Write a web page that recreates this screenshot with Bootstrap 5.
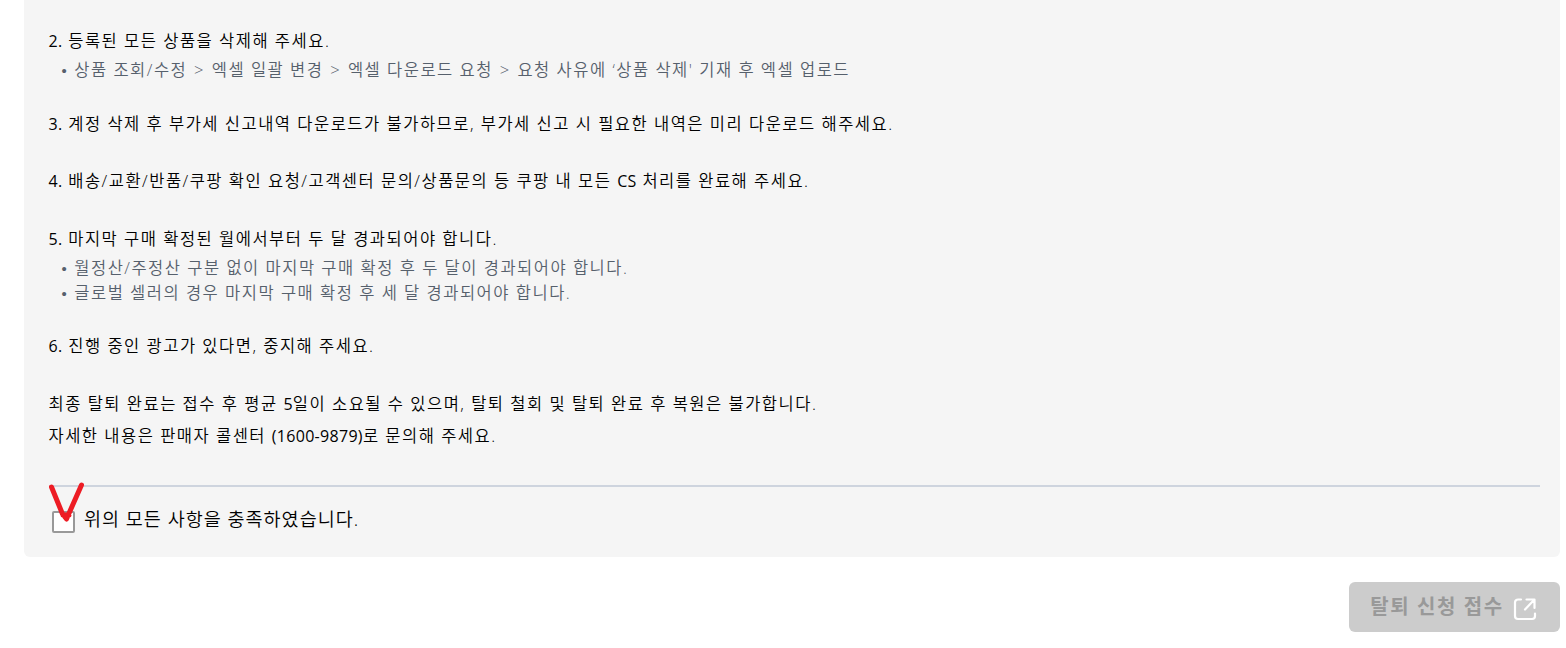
<!DOCTYPE html>
<html lang="ko">
<head>
  <meta charset="UTF-8" />
  <meta name="viewport" content="width=device-width, initial-scale=1.0" />
  <title>탈퇴 신청</title>
  <link
    href="https://cdn.jsdelivr.net/npm/bootstrap@5.3.2/dist/css/bootstrap.min.css"
    rel="stylesheet"
  />
  <style>
    body {
      font-family: "Open Sans", "Noto Sans CJK KR", sans-serif;
      font-size: 16.5px;
      font-weight: 350;
      color: #000;
      overflow: hidden;
    }
    .page-wrap { padding: 0 6px 0 24px; }
    .notice {
      height: 557px;
      padding: 25px 20px 0 24.5px;
      background: #f5f5f5;
      border-radius: 0 0 6px 6px;
    }
    .notice-item { margin-bottom: 25.6px; white-space: nowrap; }
    .notice-item p { height: 32px; line-height: 32px; letter-spacing: 1.5px; }
    .notice-item li { height: 25px; line-height: 25px; letter-spacing: 1.5px; color: #56606c; }
    .notice-item li::before {
      content: "•";
      margin-right: 6px;
      font-family: "Liberation Sans", sans-serif;
      font-size: 15px;
      line-height: 1;
    }
    .notice-item ul { padding-left: 13px; }
    .latin { font-size: 16px; font-weight: 400; letter-spacing: 0.3px; line-height: 1; }
    .gt { margin: 0 1px; }
    .divider { height: 2px; margin-top: 33px; background: #ced4de; }
    .agree { padding: 14px 0 0 3.5px; }
    .agree-box {
      width: 23px;
      height: 22px;
      margin-top: 10px;
      background: #fff;
      border: 2px solid #999;
      border-radius: 2px;
    }
    .agree-text { margin-left: 9px; font-size: 18.5px; line-height: 36px; letter-spacing: 1px; }
    .agree-mark { position: absolute; left: -6px; top: -21px; }
    .submit-btn {
      width: 211px;
      height: 50px;
      margin-top: 25px;
      background: #ccc;
      border-radius: 6px;
      color: #999;
      font-size: 20px;
      font-weight: 700;
      letter-spacing: 1.6px;
    }
    .submit-btn svg { margin: 4px 2px 0 1px; }
  </style>
</head>
<body>

  <div class="page-wrap">
    <div class="notice">
      <div class="notice-item">
        <p class="mb-0"><span class="latin">2.</span> 등록된 모든 상품을 삭제해 주세요.</p>
        <ul class="list-unstyled mb-0">
          <li>상품 조회/수정 <span class="gt">&gt;</span> 엑셀 일괄 변경 <span class="gt">&gt;</span> 엑셀 다운로드 요청 <span class="gt">&gt;</span> 요청 사유에 ‘상품 삭제' 기재 후 엑셀 업로드</li>
        </ul>
      </div>
      <div class="notice-item">
        <p class="mb-0"><span class="latin">3.</span> 계정 삭제 후 부가세 신고내역 다운로드가 불가하므로, 부가세 신고 시 필요한 내역은 미리 다운로드 해주세요.</p>
      </div>
      <div class="notice-item">
        <p class="mb-0"><span class="latin">4.</span> 배송/교환/반품/쿠팡 확인 요청/고객센터 문의/상품문의 등 쿠팡 내 모든 <span class="latin">CS</span> 처리를 완료해 주세요.</p>
      </div>
      <div class="notice-item">
        <p class="mb-0"><span class="latin">5.</span> 마지막 구매 확정된 월에서부터 두 달 경과되어야 합니다.</p>
        <ul class="list-unstyled mb-0">
          <li>월정산/주정산 구분 없이 마지막 구매 확정 후 두 달이 경과되어야 합니다.</li>
          <li>글로벌 셀러의 경우 마지막 구매 확정 후 세 달 경과되어야 합니다.</li>
        </ul>
      </div>
      <div class="notice-item">
        <p class="mb-0"><span class="latin">6.</span> 진행 중인 광고가 있다면, 중지해 주세요.</p>
      </div>
      <div class="notice-item">
        <p class="mb-0">최종 탈퇴 완료는 접수 후 평균 <span class="latin">5</span>일이 소요될 수 있으며, 탈퇴 철회 및 탈퇴 완료 후 복원은 불가합니다.</p>
        <p class="mb-0">자세한 내용은 판매자 콜센터 <span class="latin">(1600-9879)</span>로 문의해 주세요.</p>
      </div>

      <div class="divider"></div>

      <label class="agree d-flex align-items-start">
        <span class="position-relative flex-shrink-0">
          <span class="agree-box d-block"></span>
          <svg class="agree-mark" width="44" height="46" viewBox="0 0 44 46" fill="none" stroke="#ed1c24" stroke-width="5" stroke-linecap="round" stroke-linejoin="round">
            <path d="M5.500 7 L16.500 34 L20.500 39 L35.500 5 M17 35 L23 35" />
          </svg>
        </span>
        <span class="agree-text">위의 모든 사항을 충족하였습니다.</span>
      </label>
    </div>

    <div class="d-flex justify-content-end">
      <button type="button" class="submit-btn border-0 p-0 d-flex align-items-center justify-content-center gap-2" >
        <span>탈퇴 신청 접수</span>
        <svg width="24" height="24" viewBox="0 0 24 24" fill="none" stroke="#fff" stroke-width="2.200" stroke-linecap="round" stroke-linejoin="round">
          <path d="M8 2.500 H5 a3 3 0 0 0 -3 3 V19 a3 3 0 0 0 3 3 H19 a3 3 0 0 0 3 -3 V16.500 M13.500 2.500 H21.500 V11 M21 3 L12 12.500" />
        </svg>
      </button>
    </div>
  </div>

  <script src="https://cdn.jsdelivr.net/npm/bootstrap@5.3.2/dist/js/bootstrap.bundle.min.js"></script>
</body>
</html>
